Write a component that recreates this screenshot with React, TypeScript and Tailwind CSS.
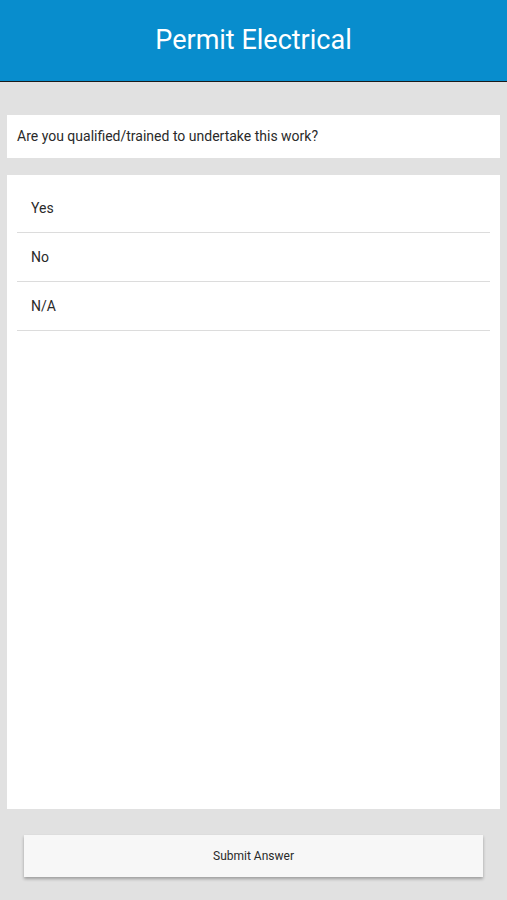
import React from "react";

export default function App() {
  const options = ["Yes", "No", "N/A"];
  return (
    <div className="w-[507px] h-[900px] bg-[#e1e1e1] flex flex-col" style={{ fontFamily: "Roboto, 'Liberation Sans', sans-serif" }}>
      <div className="h-[82px] bg-[#088dcd] border-b border-[#1a1a1a] flex items-center justify-center shrink-0">
        <h1 className="text-white text-[27px] leading-none font-normal">Permit Electrical</h1>
      </div>
      <div className="px-[7px] pt-[33px] flex flex-col flex-1">
        <div className="h-[43px] bg-white flex items-center px-[10px] text-[14px] text-[#2a2a2a]">
          Are you qualified/trained to undertake this work?
        </div>
        <div className="mt-[17px] h-[634px] bg-white pt-[9px] px-[10px]">
          {options.map((o) => (
            <div key={o} className="h-[49px] border-b border-[#dcdcdc] flex items-center pl-[14px] text-[14px] text-[#2a2a2a]">
              {o}
            </div>
          ))}
        </div>
        <div className="mt-[26px] px-[17px]">
          <button className="w-full h-[42px] bg-[#f7f7f7] shadow-[0_2px_3px_rgba(0,0,0,0.3)] text-[12px] text-[#2a2a2a] flex items-center justify-center">
            Submit Answer
          </button>
        </div>
      </div>
    </div>
  );
}
